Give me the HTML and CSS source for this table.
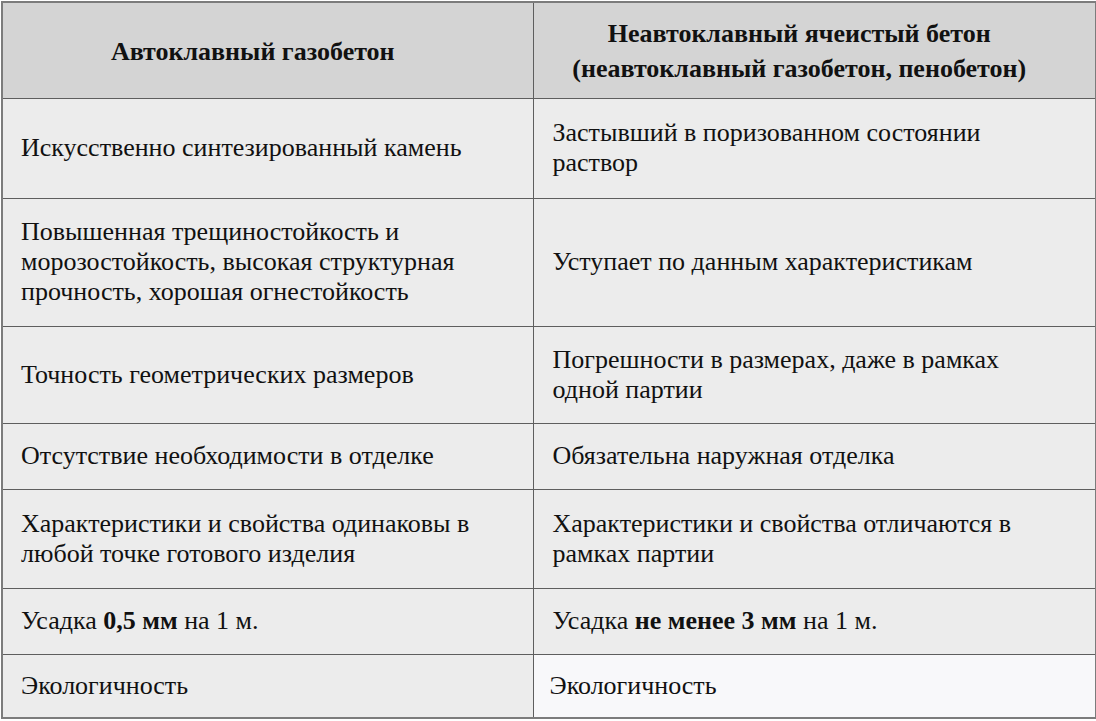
FILE: index.html
```html
<!DOCTYPE html>
<html lang="ru">
<head>
<meta charset="utf-8">
<title>Газобетон</title>
<link rel="stylesheet" href="styles.css">
</head>
<body>
<div class="wrap">
<table class="cmp">
  <colgroup><col class="c1"><col class="c2"></colgroup>
  <thead>
    <tr class="r-h">
      <th>Автоклавный газобетон</th>
      <th>Неавтоклавный ячеистый бетон<br>(неавтоклавный газобетон, пенобетон)</th>
    </tr>
  </thead>
  <tbody>
    <tr class="r1">
      <td>Искусственно синтезированный камень</td>
      <td>Застывший в поризованном состоянии<br>раствор</td>
    </tr>
    <tr class="r2">
      <td>Повышенная трещиностойкость и<br>морозостойкость, высокая структурная<br>прочность, хорошая огнестойкость</td>
      <td>Уступает по данным характеристикам</td>
    </tr>
    <tr class="r3">
      <td>Точность геометрических размеров</td>
      <td>Погрешности в размерах, даже в рамках<br>одной партии</td>
    </tr>
    <tr class="r4">
      <td>Отсутствие необходимости в отделке</td>
      <td>Обязательна наружная отделка</td>
    </tr>
    <tr class="r5">
      <td>Характеристики и свойства одинаковы в<br>любой точке готового изделия</td>
      <td>Характеристики и свойства отличаются в<br>рамках партии</td>
    </tr>
    <tr class="r6">
      <td>Усадка <b>0,5 мм</b> на 1 м.</td>
      <td>Усадка <b>не менее 3 мм</b> на 1 м.</td>
    </tr>
    <tr class="r7">
      <td>Экологичность</td>
      <td class="light">Экологичность</td>
    </tr>
  </tbody>
</table>
</div>
</body>
</html>
```

FILE: styles.css
```css
html, body {
  margin: 0;
  padding: 0;
  background: #ffffff;
}
.wrap {
  padding: 1px 1px 0 1px;
}
.cmp {
  width: 1094px;
  border-collapse: collapse;
  table-layout: fixed;
  font-family: "Liberation Serif", "Times New Roman", serif;
  font-size: 26px;
  line-height: 30px;
  color: #111111;
  border: 2px solid #7c7c7c;
}
.c1 { width: 531px; }
.c2 { width: 563px; }
.cmp th, .cmp td {
  border: 1px solid #5e5e5e;
  padding: 0 6px 0 18px;
  vertical-align: middle;
  text-align: left;
  background: #ececec;
  white-space: nowrap;
}
.cmp th {
  background: #d4d4d4;
  font-weight: bold;
  text-align: center;
  line-height: 35px;
  padding: 2px 30px 0 0;
}
.cmp td:first-child { padding-left: 18px; }
.cmp td:last-child { padding-left: 19px; }
.cmp td.light { background: #f8f8fa; padding-left: 16px; }
.r-h { height: 96px; }
.r1 { height: 100px; }
.r2 { height: 128px; }
.r3 { height: 97px; }
.r4 { height: 66px; }
.r5 { height: 99px; }
.r6 { height: 66px; }
.r7 { height: 64px; }
```
